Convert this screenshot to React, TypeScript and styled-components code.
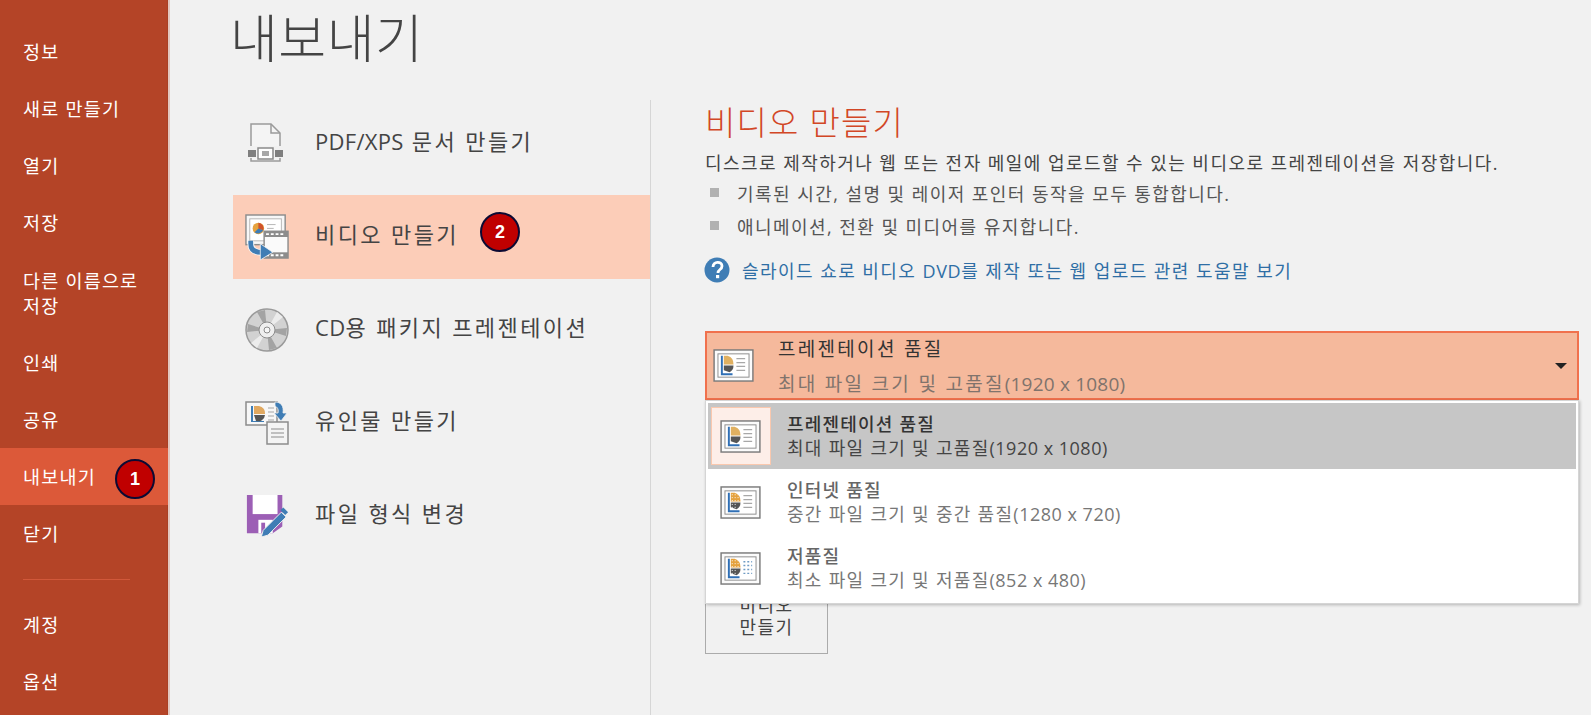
import React from 'react';
import styled, { createGlobalStyle } from 'styled-components';

const GlobalStyle = createGlobalStyle`
  * {
    margin: 0;
    padding: 0;
    box-sizing: border-box;
  }
  html, body {
    height: 100%;
    overflow: hidden;
    background: #f1f1f1;
    font-family: "Open Sans", "Noto Sans CJK KR", sans-serif;
  }
`;

const Shell = styled.div`
  display: flex;
  width: 1591px;
  height: 715px;
  overflow: hidden;
`;

const Sidebar = styled.nav`
  width: 170px;
  flex: none;
  padding-top: 23px;
  background: #b44427;
  border-right: 2px solid #e3c7bf;
  box-shadow: inset -1px 0 0 #a93f23;
`;

const NavItem = styled.a<{ $active?: boolean; $tall?: boolean }>`
  position: relative;
  display: flex;
  align-items: center;
  height: ${p => (p.$tall ? '83px' : '57px')};
  padding-left: 23px;
  font-size: 18.5px;
  line-height: 25px;
  letter-spacing: 1.2px;
  color: #fff;
  background: ${p => (p.$active ? '#dc5939' : 'transparent')};
`;

const NavRule = styled.div`
  width: 107px;
  height: 1px;
  margin: 17px 0 16px 23px;
  background: #d1583a;
`;

const Badge = styled.span<{ $left: number; $top: number }>`
  position: absolute;
  left: ${p => p.$left}px;
  top: ${p => p.$top}px;
  display: flex;
  align-items: center;
  justify-content: center;
  width: 40px;
  height: 40px;
  border: 2px solid #0c0a33;
  border-radius: 50%;
  background: #c00000;
  color: #fff;
  font: bold 18px "Liberation Sans", sans-serif;
  letter-spacing: 0;
`;

const Main = styled.main`
  flex: 1;
  min-width: 0;
`;

const PageTitle = styled.h1`
  height: 100px;
  padding: 0 0 0 60px;
  font-size: 52px;
  line-height: 76px;
  font-weight: 300;
  letter-spacing: 0.5px;
  color: #444;
`;

const Columns = styled.div`
  display: flex;
  height: 615px;
`;

const OptionList = styled.div`
  width: 481px;
  flex: none;
  padding-left: 63px;
  padding-top: 2px;
  border-right: 1px solid #d6d6d6;
`;

const Option = styled.div<{ $active?: boolean }>`
  position: relative;
  display: flex;
  align-items: center;
  height: 84px;
  margin-bottom: 9px;
  padding-left: 12px;
  background: ${p => (p.$active ? '#fccdb8' : 'transparent')};
`;

const OptionIcon = styled.span`
  display: flex;
  align-items: center;
  width: 44px;
  height: 44px;
  flex: none;
  margin-right: 26px;
`;

const OptionLabel = styled.span`
  font-size: 22px;
  letter-spacing: 2.4px;
  color: #444;
  position: relative;
  top: -4px;
`;

const Latin = styled.span<{ $spacing: number }>`
  letter-spacing: ${p => p.$spacing}px;
`;

const Detail = styled.section`
  flex: 1;
  min-width: 0;
  padding: 0 12px 0 54px;
`;

const Heading = styled.h2`
  height: 50px;
  font-size: 33px;
  line-height: 46px;
  font-weight: 300;
  letter-spacing: 1.2px;
  color: #d24726;
`;

const Description = styled.p`
  font-size: 18px;
  line-height: 26px;
  letter-spacing: 1.45px;
  color: #444;
`;

const Bullets = styled.ul`
  list-style: none;
`;

const Bullet = styled.li`
  display: flex;
  align-items: center;
  height: 33px;
  padding-left: 5px;
  font-size: 18px;
  letter-spacing: 1.45px;
  color: #555;

  &::before {
    content: '';
    width: 9px;
    height: 9px;
    margin-right: 18px;
    background: #b1b1b1;
  }
`;

const HelpLink = styled.a`
  display: flex;
  align-items: center;
  gap: 12px;
  margin: 15px 0 0 -1px;
  height: 26px;
  font-size: 18px;
  letter-spacing: 1.45px;
  color: #2f6ea5;
`;

const Dropdown = styled.div`
  position: relative;
  margin-top: 48px;
`;

const Selected = styled.div`
  display: flex;
  align-items: stretch;
  height: 69px;
  padding-left: 6px;
  border: 2px solid #f0714d;
  background: #f5b99c;
`;

const SelectedIcon = styled.span`
  display: flex;
  align-items: center;
  width: 65px;
  flex: none;
`;

const SelectedText = styled.div`
  flex: 1;
  display: flex;
  flex-direction: column;
  justify-content: space-between;
  padding: 4px 0 2px;
`;

const SelectedTitle = styled.div`
  font-size: 19px;
  line-height: 24px;
  letter-spacing: 2.3px;
  color: #333;
`;

const SelectedSub = styled.div`
  font-size: 19px;
  line-height: 24px;
  letter-spacing: 2.3px;
  color: #80736c;
`;

const Caret = styled.span`
  align-self: center;
  width: 0;
  height: 0;
  margin-right: 10px;
  border-left: 6px solid transparent;
  border-right: 6px solid transparent;
  border-top: 6px solid #222;
`;

const Menu = styled.div`
  position: absolute;
  left: 0;
  right: 0;
  top: 69px;
  height: 204px;
  padding: 2px 2px;
  background: #fff;
  border: 1px solid #d5d5d5;
  box-shadow: 1px 1px 3px rgba(0, 0, 0, 0.25);
`;

const MenuItem = styled.div<{ $active?: boolean }>`
  display: flex;
  align-items: center;
  height: 66px;
  padding-left: 3px;
  background: ${p => (p.$active ? '#c6c6c6' : 'transparent')};
`;

const MenuIcon = styled.span<{ $active?: boolean }>`
  display: flex;
  align-items: center;
  justify-content: center;
  width: 60px;
  height: 58px;
  flex: none;
  margin-right: 16px;
  padding-right: 2px;
  background: ${p => (p.$active ? '#fdeee8' : 'transparent')};
  border: 1px solid ${p => (p.$active ? '#fac8ae' : 'transparent')};
`;

const MenuTitle = styled.div<{ $active?: boolean }>`
  font-size: 18px;
  line-height: 24px;
  font-weight: 500;
  letter-spacing: 1.2px;
  color: ${p => (p.$active ? '#333' : '#666')};
`;

const MenuSub = styled.div<{ $active?: boolean }>`
  font-size: 18px;
  line-height: 24px;
  letter-spacing: 1.3px;
  color: ${p => (p.$active ? '#444' : '#777')};
`;

const MakeButton = styled.button`
  display: block;
  width: 123px;
  height: 74px;
  margin-top: 180px;
  padding-bottom: 3px;
  border: 1.5px solid #ababab;
  background: #f1f1f1;
  font-family: inherit;
  font-size: 18px;
  line-height: 22px;
  letter-spacing: 1.45px;
  color: #444;
`;

const PdfIcon = () => (
  <svg width="46" height="46" viewBox="0 0 44 44">
    <path d="M6 24V2h20l9 9v13M35 36v3H6v-3" fill="#f4f4f4" stroke="#9a9a9a" strokeWidth="1.5" />
    <path d="M26 2v9h9" fill="none" stroke="#9a9a9a" strokeWidth="1.5" />
    <rect x="3" y="28" width="8" height="7" fill="#7f7f7f" />
    <rect x="30" y="28" width="8" height="7" fill="#7f7f7f" />
    <rect x="13" y="26" width="15" height="11" fill="#fff" stroke="#8a8a8a" strokeWidth="1.5" />
    <rect x="17" y="29" width="7" height="5" fill="#a8a8a8" />
  </svg>
);

const VideoIcon = () => (
  <svg width="46" height="48" viewBox="0 0 46 48">
    <rect x="1" y="1" width="41" height="31" fill="#f7f7f7" stroke="#8c8c8c" strokeWidth="1.5" />
    <rect x="5" y="5" width="33" height="23" fill="#fff" stroke="#b5b5b5" />
    <circle cx="14" cy="15" r="6" fill="#e5a23e" />
    <path d="M14 15V9a6 6 0 0 1 5 8z" fill="#d0532b" />
    <path d="M14 15l5 2a6 6 0 0 1-9 2z" fill="#3f7db5" />
    <path d="M23 11h9M23 15h7" stroke="#b5b5b5" />
    <rect x="20" y="18" width="25" height="28" fill="#fafafa" stroke="#8c8c8c" strokeWidth="1.5" />
    <rect x="20" y="18" width="25" height="6" fill="#8c8c8c" />
    <rect x="20" y="40" width="25" height="6" fill="#8c8c8c" />
    <path d="M22 20h3v2h-3zM27 20h3v2h-3zM32 20h3v2h-3zM37 20h3v2h-3zM22 42h3v2h-3zM27 42h3v2h-3zM32 42h3v2h-3zM37 42h3v2h-3z" fill="#fff" />
    <path d="M6 28v3c0 6 4 9 11 9" fill="none" stroke="#f7f7f7" strokeWidth="7" />
    <path d="M6 28v3c0 6 4 9 11 9" fill="none" stroke="#3f7db5" strokeWidth="5" />
    <path d="M16 31l13 9-13 8z" fill="#3f7db5" stroke="#f7f7f7" strokeWidth="0.8" />
  </svg>
);

const DiscIcon = () => (
  <svg width="44" height="44" viewBox="0 0 44 44">
    <circle cx="22" cy="22" r="21" fill="#d2d2d2" stroke="#9a9a9a" strokeWidth="1.5" />
    <path d="M22 22L12 4l8-2zM22 22l10 18-8 2zM22 22L3 16l-1 8zM22 22l19 6 1-8z" fill="#a3a3a3" />
    <path d="M22 22L32 4l6 5zM22 22L12 40l-6-5z" fill="#ececec" />
    <circle cx="22" cy="22" r="8" fill="#efefef" stroke="#8c8c8c" />
    <circle cx="22" cy="22" r="3" fill="#f7f7f7" stroke="#8c8c8c" />
  </svg>
);

const HandoutIcon = () => (
  <svg width="44" height="44" viewBox="0 0 44 44">
    <rect x="1" y="1" width="31" height="23" fill="#f7f7f7" stroke="#8c8c8c" strokeWidth="1.5" />
    <path d="M6 5v16h13v-1H8V5z" fill="#3f7db5" />
    <path d="M9 5h5a7 7 0 0 1 6 8H9z" fill="#e0a860" />
    <path d="M9 14h11a7 7 0 0 1-9 6z" fill="#555" />
    <path d="M23 7h6M23 11h6M23 15h6M23 19h6" stroke="#a5a5a5" />
    <rect x="22" y="21" width="21" height="22" fill="#f4f4f4" stroke="#8c8c8c" strokeWidth="1.5" />
    <path d="M26 28h13M26 32h13M26 36h13" stroke="#8c8c8c" />
    <path d="M30 1c6 0 9 4 8 11h4l-6 8-7-8h4c1-4-1-6-3-7z" fill="#3f7db5" stroke="#f1f1f1" strokeWidth="0.8" />
  </svg>
);

const SaveIcon = () => (
  <svg width="46" height="46" viewBox="0 0 46 46">
    <path d="M2 1h37v33L29 41H2z" fill="#9c5fb5" />
    <rect x="8" y="1" width="26" height="20" fill="#fff" />
    <rect x="14" y="27" width="15" height="14" fill="#fff" />
    <rect x="17" y="30" width="4" height="11" fill="#9c5fb5" />
    <path d="M17 45l2-7 19-19 5 5-19 19z" fill="#3f7db5" stroke="#f1f1f1" />
    <path d="M37 17l3-3 5 5-3 3z" fill="#3f7db5" />
  </svg>
);

const QualityIcon = ({ level }: { level: 'high' | 'mid' | 'low' }) => {
  const pie = level === 'high' ? '#e0b060' : '#e5a23e';
  return (
    <svg width="41" height="33" viewBox="0 0 42 34">
      <rect x="1" y="1" width="40" height="32" fill="#fbfbfb" stroke="#7b7b7b" strokeWidth="1.5" />
      <rect x="5" y="5" width="32" height="24" fill="#fff" stroke="#8d8d8d" />
      <path d="M8 7h2v18h10v2H8z" fill="#2f6fb5" />
      <path d="M11 7h4a9 9 0 0 1 6 9H11z" fill={pie} />
      <path d="M11 17h10a8 8 0 0 1-4 7l-6-2z" fill="#555" />
      {level !== 'low' ? (
        <path d="M24 10h9M24 14h9M24 18h9M24 22h9" stroke="#a8a8a8" strokeWidth="1.3" />
      ) : (
        <path d="M24 10h9M24 14h9M24 18h9M24 22h9" stroke="#6f9bc4" strokeWidth="1.5" strokeDasharray="2 2" />
      )}
      {level !== 'high' && <path d="M12 9h7M12 12h8M12 15h8M12 19h6M12 22h4" stroke="#fbfbfb" strokeWidth="1" strokeDasharray="1 2" />}
    </svg>
  );
};

const HelpIcon = () => (
  <svg width="26" height="26" viewBox="0 0 26 26">
    <circle cx="13" cy="13" r="12.5" fill="#3f7db5" />
    <path d="M9 10c0-6 9-6 9-1 0 4-4 3-4 7" fill="none" stroke="#fff" strokeWidth="2.8" />
    <rect x="12" y="18" width="3.2" height="3.2" fill="#fff" />
  </svg>
);

const navItems = [
  { label: '정보' },
  { label: '새로 만들기' },
  { label: '열기' },
  { label: '저장' },
  { label: '다른 이름으로 저장', tall: true },
  { label: '인쇄' },
  { label: '공유' },
  { label: '내보내기', active: true },
  { label: '닫기' },
];

const options = [
  { key: 'pdf', label: <><Latin $spacing={0.3}>PDF/XPS</Latin> 문서 만들기</>, icon: <PdfIcon /> },
  { key: 'video', label: '비디오 만들기', icon: <VideoIcon />, active: true },
  { key: 'cd', label: <><Latin $spacing={0.3}>CD</Latin>용 패키지 프레젠테이션</>, icon: <DiscIcon /> },
  { key: 'handout', label: '유인물 만들기', icon: <HandoutIcon /> },
  { key: 'format', label: '파일 형식 변경', icon: <SaveIcon /> },
];

const qualities = [
  { title: '프레젠테이션 품질', sub: '최대 파일 크기 및 고품질', size: '(1920 x 1080)', level: 'high' as const, active: true },
  { title: '인터넷 품질', sub: '중간 파일 크기 및 중간 품질', size: '(1280 x 720)', level: 'mid' as const },
  { title: '저품질', sub: '최소 파일 크기 및 저품질', size: '(852 x 480)', level: 'low' as const },
];

const App: React.FC = () => {
  return (
    <Shell>
      <GlobalStyle />
      <Sidebar>
        {navItems.map(item => (
          <NavItem key={item.label} $active={item.active} $tall={item.tall}>
            {item.tall ? (
              <span>
                다른 이름으로
                <br />
                저장
              </span>
            ) : (
              item.label
            )}
            {item.active && (
              <Badge $left={115} $top={11}>
                1
              </Badge>
            )}
          </NavItem>
        ))}
        <NavRule />
        <NavItem>계정</NavItem>
        <NavItem>옵션</NavItem>
      </Sidebar>
      <Main>
        <PageTitle>내보내기</PageTitle>
        <Columns>
          <OptionList>
            {options.map(option => (
              <Option key={option.key} $active={option.active}>
                <OptionIcon>{option.icon}</OptionIcon>
                <OptionLabel>{option.label}</OptionLabel>
                {option.active && (
                  <Badge $left={247} $top={17}>
                    2
                  </Badge>
                )}
              </Option>
            ))}
          </OptionList>
          <Detail>
            <Heading>비디오 만들기</Heading>
            <Description>디스크로 제작하거나 웹 또는 전자 메일에 업로드할 수 있는 비디오로 프레젠테이션을 저장합니다.</Description>
            <Bullets>
              <Bullet>기록된 시간, 설명 및 레이저 포인터 동작을 모두 통합합니다.</Bullet>
              <Bullet>애니메이션, 전환 및 미디어를 유지합니다.</Bullet>
            </Bullets>
            <HelpLink>
              <HelpIcon />
              <span>
                슬라이드 쇼로 비디오 <Latin $spacing={0.6}>DVD</Latin>를 제작 또는 웹 업로드 관련 도움말 보기
              </span>
            </HelpLink>
            <Dropdown>
              <Selected>
                <SelectedIcon>
                  <QualityIcon level="high" />
                </SelectedIcon>
                <SelectedText>
                  <SelectedTitle>프레젠테이션 품질</SelectedTitle>
                  <SelectedSub>
                    최대 파일 크기 및 고품질<Latin $spacing={0.2}>(1920 x 1080)</Latin>
                  </SelectedSub>
                </SelectedText>
                <Caret />
              </Selected>
              <Menu>
                {qualities.map(q => (
                  <MenuItem key={q.title} $active={q.active}>
                    <MenuIcon $active={q.active}>
                      <QualityIcon level={q.level} />
                    </MenuIcon>
                    <div>
                      <MenuTitle $active={q.active}>{q.title}</MenuTitle>
                      <MenuSub $active={q.active}>
                        {q.sub}
                        <Latin $spacing={0.5}>{q.size}</Latin>
                      </MenuSub>
                    </div>
                  </MenuItem>
                ))}
              </Menu>
              <MakeButton>
                비디오
                <br />
                만들기
              </MakeButton>
            </Dropdown>
          </Detail>
        </Columns>
      </Main>
    </Shell>
  );
};

export default App;
